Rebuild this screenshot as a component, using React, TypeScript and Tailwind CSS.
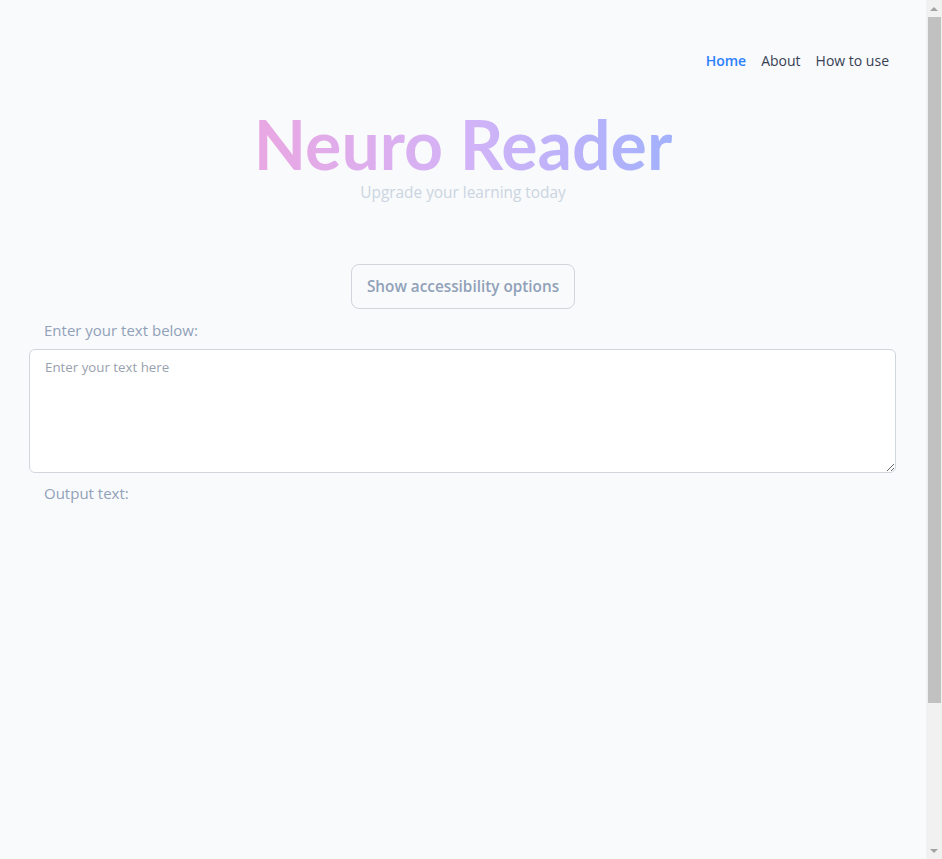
import { useState } from "react";

const font = { fontFamily: '"Open Sans", "Noto Sans", sans-serif' };

const NavBar = () => {
  return (
    <nav className="flex justify-end gap-[15px] pt-[50px] pr-[37px] text-[14px] leading-[22px]">
      <a className="font-semibold text-blue-500 cursor-pointer">Home</a>
      <a className="font-medium text-gray-700 cursor-pointer">About</a>
      <a className="font-medium text-gray-700 cursor-pointer">How to use</a>
    </nav>
  );
};

// classic browser scrollbar, as in the screenshot
const Scrollbar = () => {
  return (
    <div className="w-[16px] shrink-0 flex flex-col items-center bg-[#f1f1f1]">
      <div className="h-[17px] flex items-center justify-center">
        <div className="w-0 h-0 border-l-[4px] border-r-[4px] border-b-[4px] border-l-transparent border-r-transparent border-b-[#a3a3a3]" />
      </div>
      <div className="w-[13px] h-[686px] bg-[#c1c1c1]" />
      <div className="flex-1" />
      <div className="h-[17px] flex items-center justify-center">
        <div className="w-0 h-0 border-l-[4px] border-r-[4px] border-t-[4px] border-l-transparent border-r-transparent border-t-[#a3a3a3]" />
      </div>
    </div>
  );
};

export default function App() {
  const [text, setText] = useState<string>("");
  const [showOptions, setShowOptions] = useState<boolean>(false);

  return (
    <div className="flex h-[859px] overflow-hidden bg-gray-50 text-gray-700" style={font}>
      <div className="flex-1 min-w-0">
        <NavBar />
        {/* Hero */}
        <div className="flex flex-col items-center mt-[40px]">
          <h1
            className="text-[68px] leading-[64px] font-bold bg-gradient-to-r from-[#e9a7e2] via-[#d3b3f7] to-[#a3b1fc] bg-clip-text text-transparent"
            style={{ fontFamily: "Lato, sans-serif" }}
          >
            Neuro Reader
          </h1>
          <p className="mt-[5px] text-[15.4px] leading-[24px] text-slate-300">
            Upgrade your learning today
          </p>
          <button
            className="mt-[59px] h-[45px] px-[15px] rounded-lg border border-gray-300 text-[15.3px] font-semibold text-slate-400 cursor-pointer"
            onClick={() => setShowOptions(!showOptions)}
          >
            {showOptions ? "Hide accessibility options" : "Show accessibility options"}
          </button>
        </div>
        {/* Input / output */}
        <div className="pl-[29px] pr-[30px] mt-[9px]">
          <label className="block pl-[15px] text-[15px] leading-[24px] text-slate-400">
            Enter your text below:
          </label>
          <textarea
            className="mt-[7px] block w-full h-[124px] rounded-md border border-gray-300 bg-white px-[15px] py-[8px] text-[13.3px] text-gray-700 placeholder:text-gray-400 outline-none"
            placeholder="Enter your text here"
            value={text}
            onChange={(e) => setText(e.target.value)}
          />
          <div className="mt-[8px] pl-[15px] text-[15px] leading-[24px] text-slate-400">
            Output text:
          </div>
          <div className="pl-[15px] text-[15px] text-gray-700">{text}</div>
        </div>
      </div>
      <Scrollbar />
    </div>
  );
}
